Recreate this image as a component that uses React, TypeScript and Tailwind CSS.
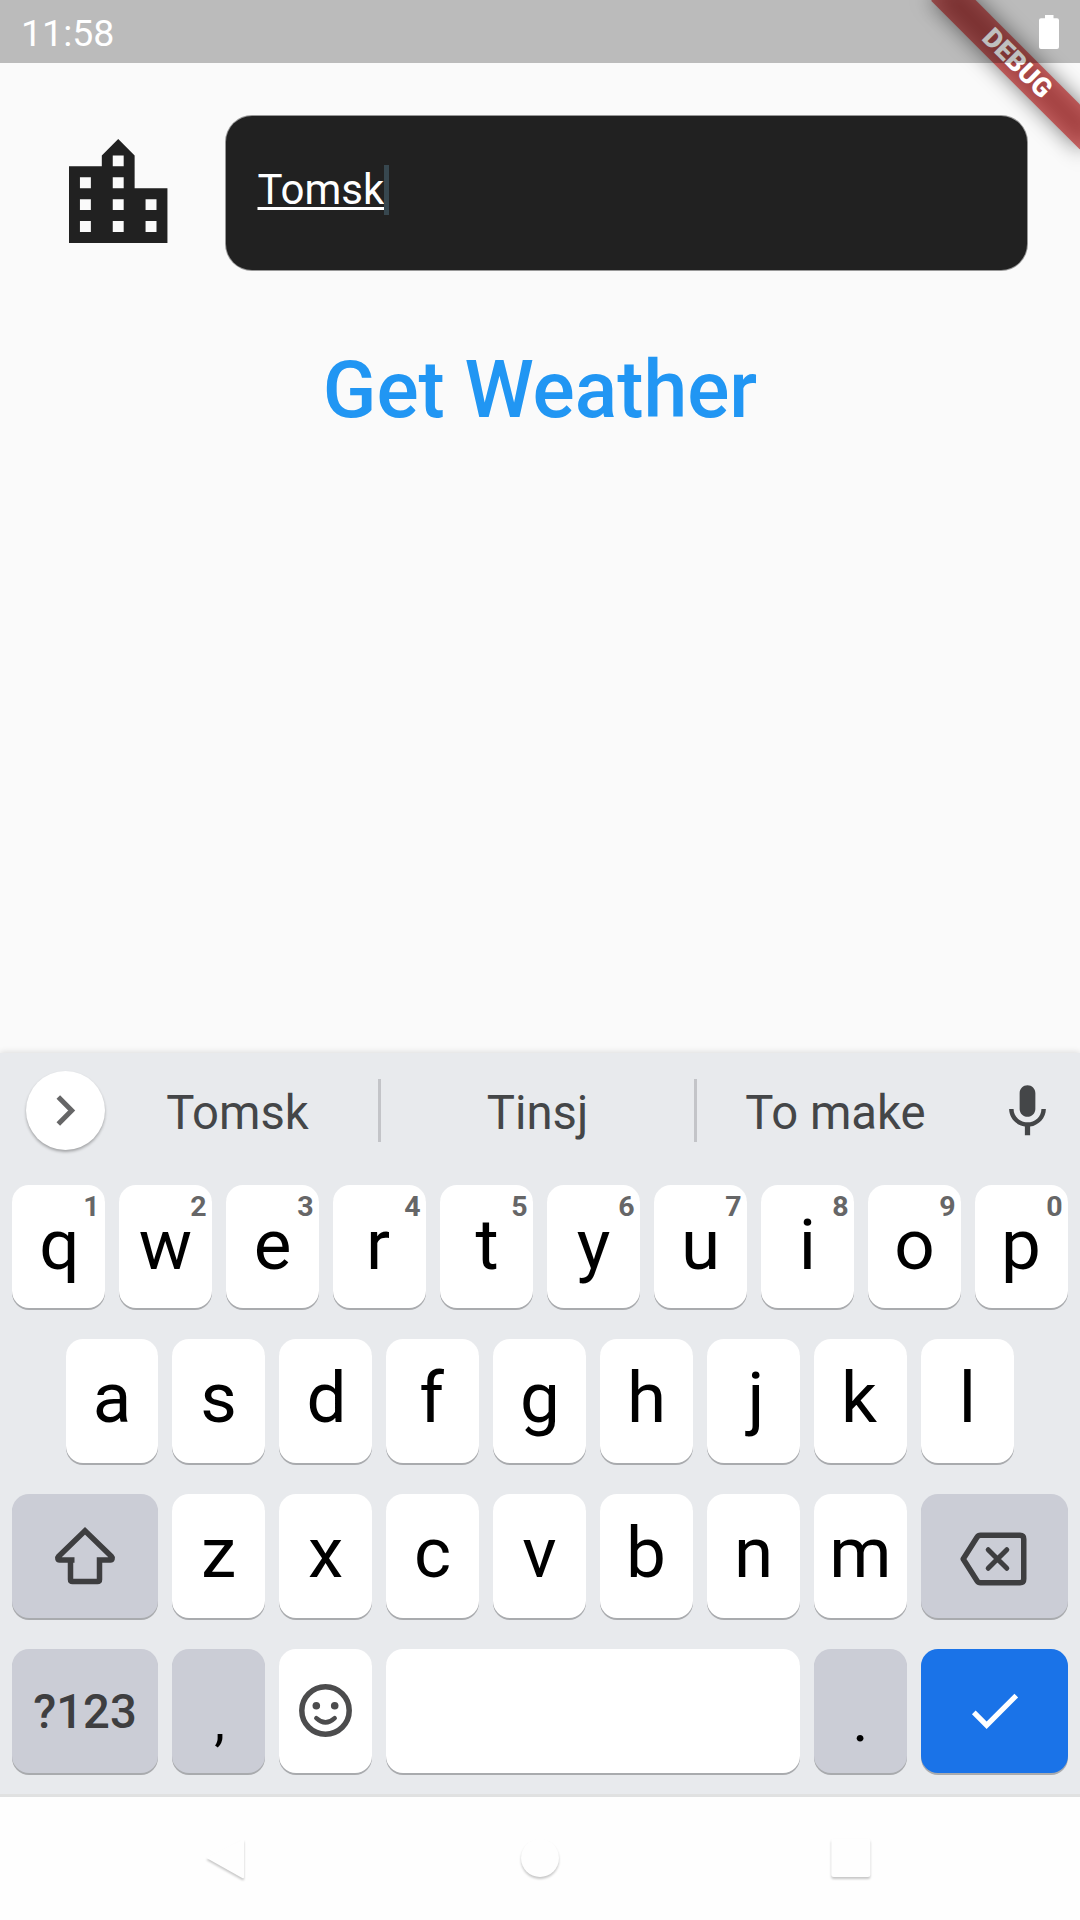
import React from "react";

const digits = "1234567890";

// Side padding that centres each glyph by its ink rather than by its advance width.
const opticalPadding: Record<string, string> = {
  q: "pl-[2px]",
  d: "pl-[2px]",
  g: "pl-[1px]",
  t: "pl-[1px]",
  j: "pl-[5px]",
  b: "pr-[1px]",
  p: "pr-[1px]",
  k: "pr-[3px]",
  r: "pr-[3px]",
  f: "pr-[2px]",
};

function Key({
  children,
  className = "",
}: {
  children?: React.ReactNode;
  className?: string;
}) {
  return (
    <button
      type="button"
      className={
        "flex items-center justify-center rounded-[17px] shadow-[0_2px_0_0_#a9abae] " +
        className
      }
    >
      {children}
    </button>
  );
}

function Letter({
  char,
  hint,
  width = "w-[93px]",
  bottom = "pb-[6px]",
}: {
  char: string;
  hint?: string;
  width?: string;
  bottom?: string;
}) {
  return (
    <Key className={`relative bg-white text-[71px] leading-none text-black ${bottom} ${width}`}>
      <span className={opticalPadding[char] ?? ""}>{char}</span>
      {hint && (
        <span className="absolute top-[7px] right-[5.5px] text-[28.5px] leading-[30px] font-bold text-[#666667]">
          {hint}
        </span>
      )}
    </Key>
  );
}

function DebugBanner() {
  return (
    <div className="pointer-events-none absolute top-[73.5px] right-[-105px] h-[31.5px] w-[210px] origin-[105px_-73.5px] rotate-45">
      <div className="absolute inset-0 bg-black/50 blur-[10.4px]" />
      <div className="absolute inset-0 bg-[#b71c1c]/63" />
      <div className="relative text-center text-[26.8px] leading-[31.5px] font-black text-white">DEBUG</div>
    </div>
  );
}

function StatusBar() {
  return (
    <header className="relative z-10 flex h-[63px] items-center justify-between bg-black/25 px-[21px] text-white">
      <span className="pt-[4px] text-[37.5px] leading-none">11:58</span>
      <svg className="h-[34px] w-5" viewBox="0 0 20 34" fill="currentColor">
        <path d="M6 0h8.500v3.300H18a2 2 0 0 1 2 2V32a2 2 0 0 1-2 2H2a2 2 0 0 1-2-2V5.300a2 2 0 0 1 2-2h4z" />
      </svg>
    </header>
  );
}

function Suggestions() {
  return (
    <div className="flex h-[115px] items-center text-[47.25px] leading-none text-[#444648]">
      <div className="ml-[26px] flex h-[79px] w-[79px] items-center justify-center rounded-full bg-white shadow-[0_2px_3px_rgba(0,0,0,0.3)]">
        <svg className="h-8 w-5" viewBox="0 0 20 32" fill="none" stroke="#666667" strokeWidth="5">
          <path d="M2.300 1.900 15.700 15.500 2.300 29.100" />
        </svg>
      </div>
      <span className="-ml-2 w-[281px] pt-[7px] text-center">Tomsk</span>
      <span className="h-[63px] w-[3px] bg-[#c3c4c8]" />
      <span className="w-[313px] pt-[7px] text-center">Tinsj</span>
      <span className="h-[63px] w-[3px] bg-[#c3c4c8]" />
      <span className="w-[277px] pt-[7px] text-center">To make</span>
      <svg className="mt-[1px] ml-[22px] h-[63px] w-[63px]" viewBox="0 0 24 24" fill="currentColor">
        <path d="M12 14c1.660 0 2.990-1.340 2.990-3L15 5c0-1.660-1.340-3-3-3S9 3.340 9 5v6c0 1.660 1.340 3 3 3zm5.300-3c0 3-2.540 5.100-5.300 5.100S6.700 14 6.700 11H5c0 3.410 2.720 6.230 6 6.720V21h2v-3.280c3.280-.480 6-3.300 6-6.720h-1.700z" />
      </svg>
    </div>
  );
}

function Keyboard() {
  return (
    <section className="relative h-[744px] border-b-[3px] border-[#e0e1e1] bg-[#e8eaed] shadow-[0_-1px_6px_rgba(0,0,0,0.12)]">
      <Suggestions />
      <div className="mt-[17px] flex flex-col gap-[31px] px-3">
        <div className="flex h-[123px] gap-[14px]">
          {"qwertyuiop".split("").map((c, i) => (
            <Letter key={c} char={c} hint={digits[i]} bottom="pb-[4px]" />
          ))}
        </div>
        <div className="flex h-[124px] gap-[14px] pl-[54px]">
          {"asdfghjkl".split("").map((c, i) => (
            <Letter key={c} char={c} width={i === 0 ? "w-[92px]" : "w-[93px]"} bottom="pb-[7px]" />
          ))}
        </div>
        <div className="flex h-[124px] gap-[14px]">
          <Key className="w-[146px] bg-[#cbcdd6] text-[#3e3e40]">
            <svg className="h-[60px] w-[62px]" viewBox="0 0 62 60" fill="none" stroke="currentColor" strokeWidth="5.500" strokeLinejoin="round">
              <path strokeLinejoin="miter" strokeMiterlimit="2" d="M20.500 34H5.500C3.800 34 3.200 31.800 4.500 30.500L31 4.800 57.500 30.500C58.800 31.800 58.200 34 56.500 34H45.500V53.500Q45.500 55.500 43.500 55.500H18.500Q16.500 55.500 16.500 53.500V34" />
            </svg>
          </Key>
          {"zxcvbnm".split("").map((c) => (
            <Letter key={c} char={c} bottom="pb-[7px]" />
          ))}
          <Key className="w-[147px] bg-[#cbcdd6] text-[#3e3e40]">
            <svg className="mt-[5px] mr-px h-[54px] w-[68px]" viewBox="0 0 68 54" fill="none" stroke="currentColor" strokeWidth="5.500" strokeLinejoin="round" strokeLinecap="round">
              <path d="M20.500 3.250H60Q63.750 3.250 63.750 7V47Q63.750 50.750 60 50.750H20.500Q18.300 50.750 17 48.800L3.200 27 17 5.200Q18.300 3.250 20.500 3.250Z" />
              <path strokeWidth="5" d="M28.200 17.700 46.800 36.300M46.800 17.700 28.200 36.300" />
            </svg>
          </Key>
        </div>
        <div className="flex h-[124px] gap-[14px] text-black">
          <Key className="w-[146px] bg-[#cbcdd6] pt-[4px] text-[47.25px] leading-none font-medium text-[#3e3e40]">?123</Key>
          <Key className="w-[93px] bg-[#cbcdd6] pt-[22px] pl-[2px] text-[54px] leading-none">,</Key>
          <Key className="w-[93px] bg-white">
            <svg className="h-[54px] w-[54px]" viewBox="0 0 54 54" fill="none" stroke="#4c4c4d" strokeWidth="5.500">
              <circle cx="26.500" cy="26.500" r="23.700" />
              <circle cx="17.300" cy="21.800" r="3.800" fill="#4c4c4d" stroke="none" />
              <circle cx="35.700" cy="21.800" r="3.800" fill="#4c4c4d" stroke="none" />
              <path strokeWidth="4.500" strokeLinecap="round" d="M17.300 34.200Q26.500 42.700 35.700 34.200" />
            </svg>
          </Key>
          <Key className="w-[414px] bg-white" />
          <Key className="w-[93px] bg-[#cbcdd6] pt-[20px] text-[60px] leading-none">.</Key>
          <Key className="w-[147px] bg-[#1a73e8] text-white">
            <svg className="mb-[2px] h-[63px] w-[63px]" viewBox="0 0 24 24" fill="currentColor">
              <path d="M9 16.170 4.830 12l-1.420 1.410L9 19 21 7l-1.410-1.410z" />
            </svg>
          </Key>
        </div>
      </div>
    </section>
  );
}

function NavigationBar() {
  const icon = "h-[50px] w-[50px] overflow-visible drop-shadow-[0_2.5px_1px_rgba(0,0,0,0.22)]";
  return (
    <nav className="relative flex h-[123px] items-center justify-between bg-[#fefefe] pr-[204px] pl-[200px]">
      <svg className={icon} viewBox="0 0 50 50" fill="#fefefe">
        <path d="M43 5.500Q44 5 44 6.500V43Q44 45 42.200 44L7 24.300Q6 23.800 7 23.200Z" />
      </svg>
      <svg className={icon} viewBox="0 0 50 50" fill="#fefefe">
        <circle cx="27" cy="24" r="19" />
      </svg>
      <svg className={icon} viewBox="0 0 50 50" fill="#fefefe">
        <rect x="5.300" y="4.500" width="39" height="38.500" rx="2.500" />
      </svg>
    </nav>
  );
}

export default function App() {
  return (
    <div className="relative flex h-[1920px] w-[1080px] flex-col overflow-hidden bg-[#fafafa] font-['Roboto',sans-serif]">
      <DebugBanner />
      <StatusBar />
      <main className="flex h-[990px] flex-col items-center">
        <div className="flex w-full items-center pt-[53px] pr-[53px] pl-[52px]">
          <svg className="mt-[1px] h-[132px] w-[132px] shrink-0" viewBox="-0.108 -0.010 24.137 24.137" fill="#212121">
            <path d="M15 11V5l-3-3-3 3v2H3v14h18V11h-6zm-8 8H5v-2h2v2zm0-4H5v-2h2v2zm0-4H5V9h2v2zm6 8h-2v-2h2v2zm0-4h-2v-2h2v2zm0-4h-2V9h2v2zm0-4h-2V5h2v2zm6 12h-2v-2h2v2zm0-4h-2v-2h2v2z" />
          </svg>
          <div className="ml-[42px] flex h-[154px] flex-1 items-center rounded-[26px] bg-[#212121] pb-[6px] pl-[31.5px] text-[42px] leading-[50px] text-white shadow-[0_0_0_1px_rgba(33,33,33,0.45)]">
            <span className="underline decoration-[2.6px] underline-offset-[3px]">Tomsk</span>
            <span className="h-[50px] w-[5px] bg-[#37474f]" />
          </div>
        </div>
        <button type="button" className="mt-[70px] text-[78.75px] leading-[100px] font-medium text-[#2196f3]">
          Get Weather
        </button>
      </main>
      <Keyboard />
      <NavigationBar />
    </div>
  );
}
